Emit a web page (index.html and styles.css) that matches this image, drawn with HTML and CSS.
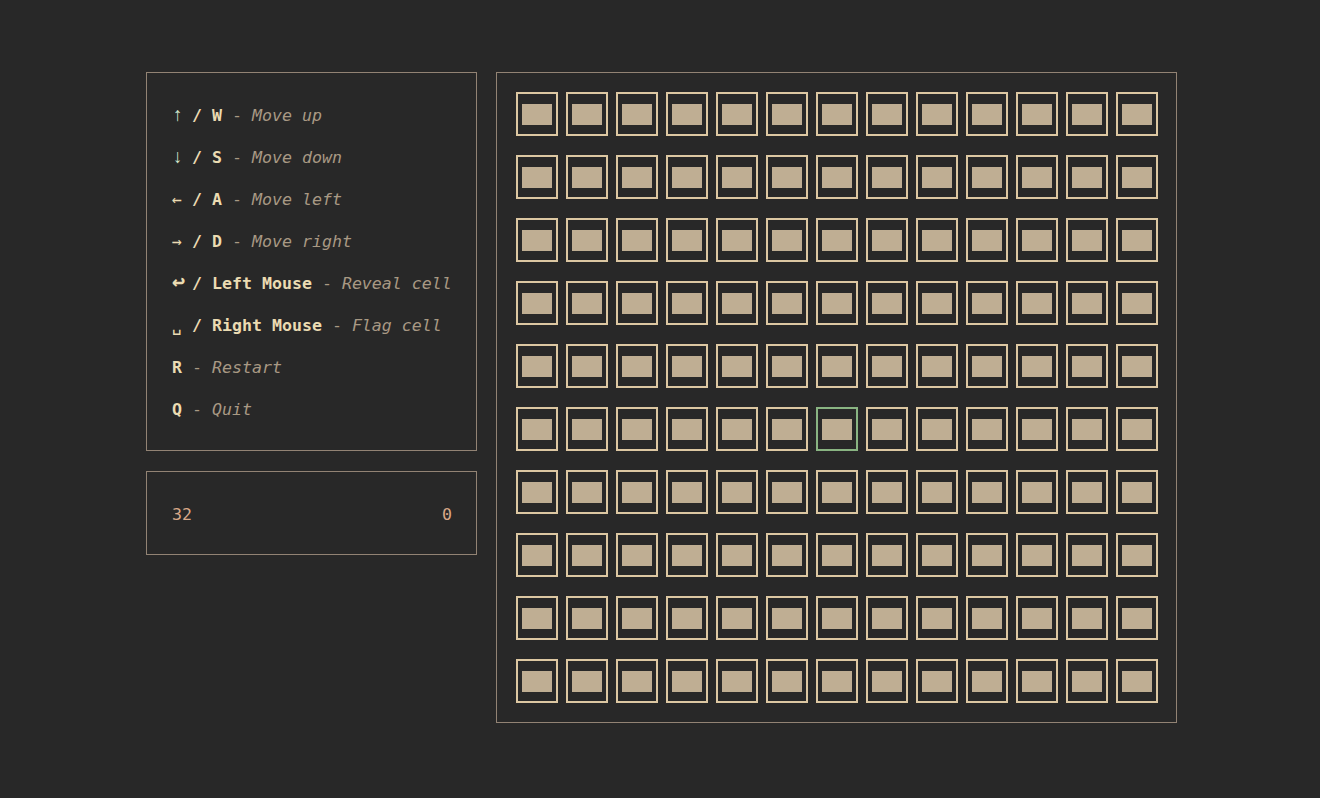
FILE: index.html
```html
<!DOCTYPE html>
<html>
<head>
<meta charset="utf-8">
<link rel="stylesheet" href="styles.css">
</head>
<body>
<main class="app">
  <aside class="side">
    <section class="panel help">
      <div class="line"><span class="sym arrow">↑</span> <b>/ W</b> <span class="sep">-</span> <i>Move up</i></div>
      <div class="line"><span class="sym arrow">↓</span> <b>/ S</b> <span class="sep">-</span> <i>Move down</i></div>
      <div class="line"><span class="sym">←</span> <b>/ A</b> <span class="sep">-</span> <i>Move left</i></div>
      <div class="line"><span class="sym">→</span> <b>/ D</b> <span class="sep">-</span> <i>Move right</i></div>
      <div class="line"><span class="sym wide">↩</span><b>/ Left Mouse</b> <span class="sep">-</span> <i>Reveal cell</i></div>
      <div class="line"><span class="sym">␣</span> <b>/ Right Mouse</b> <span class="sep">-</span> <i>Flag cell</i></div>
      <div class="line"><b>R</b> <span class="sep">-</span> <i>Restart</i></div>
      <div class="line"><b>Q</b> <span class="sep">-</span> <i>Quit</i></div>
    </section>
    <section class="panel stats">
      <span class="num">32</span>
      <span class="num">0</span>
    </section>
  </aside>
  <section class="panel board" id="board"></section>
</main>
<script src="script.js"></script>
</body>
</html>
```

FILE: script.js
```js
const board = document.getElementById('board');
for (let r = 0; r < 10; r++) {
  for (let c = 0; c < 13; c++) {
    const cell = document.createElement('div');
    cell.className = 'cell' + (r === 5 && c === 6 ? ' active' : '');
    const fill = document.createElement('span');
    fill.className = 'fill';
    cell.appendChild(fill);
    board.appendChild(cell);
  }
}
```

FILE: styles.css
```css
html, body {
  margin: 0;
  padding: 0;
  background: #282828;
  height: 100%;
}
body {
  font-family: "DejaVu Sans Mono", "Liberation Mono", monospace;
  font-size: 16.6px;
  color: #d4be98;
}
.app {
  display: flex;
  gap: 19px;
  justify-content: center;
  align-items: flex-start;
  padding-top: 72px;
  padding-left: 3px;
}
.panel {
  border: 1px solid #928374;
  box-sizing: border-box;
}
.side {
  display: flex;
  flex-direction: column;
  gap: 20px;
  width: 331px;
}
.help {
  padding: 22px 24px 19px 25px;
}
.line {
  line-height: 42px;
  height: 42px;
  white-space: pre;
  color: #ebdbb2;
}
.line b {
  font-weight: bold;
  color: #ebdbb2;
}
.sym {
  color: #ebdbb2;
  display: inline-block;
  width: 10px;
  line-height: 1;
  vertical-align: baseline;
}
.sym.arrow {
  color: #cfe6cc;
  font-family: "Liberation Mono", monospace;
  font-size: 19px;
  font-weight: bold;
  text-align: center;
}
.sym.wide {
  width: 20px;
  font-size: 22px;
  font-weight: bold;
}
.sep {
  color: #a89984;
}
.line i {
  font-style: italic;
  color: #a89984;
}
.stats {
  display: flex;
  justify-content: space-between;
  padding: 22px 24px 18px 25px;
  line-height: 42px;
}
.num {
  color: #d9a988;
}
.board {
  width: 681px;
  padding: 19px 18px 19px 19px;
  display: grid;
  grid-template-columns: repeat(13, 42px);
  grid-auto-rows: 44px;
  column-gap: 8px;
  row-gap: 19px;
}
.cell {
  box-sizing: border-box;
  border: 2px solid #dcc7a2;
  display: flex;
  align-items: center;
  justify-content: center;
}
.cell.active {
  border-color: #89b482;
}
.fill {
  width: 30px;
  height: 21px;
  background: #bfae93;
}
```
